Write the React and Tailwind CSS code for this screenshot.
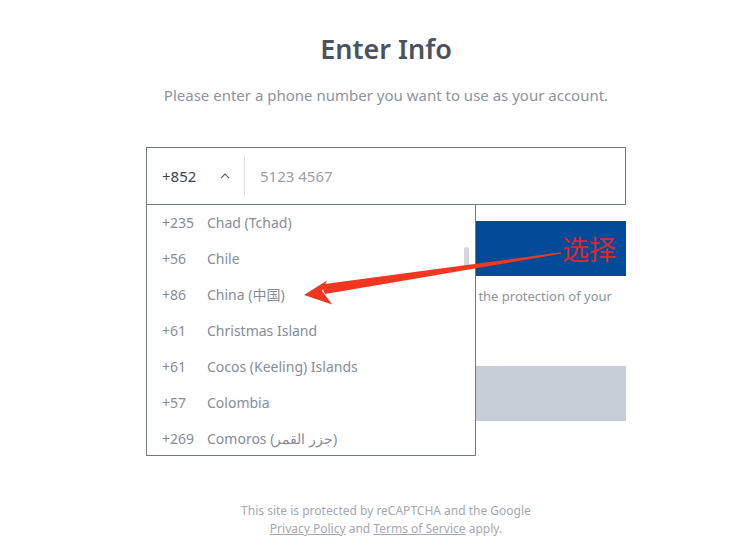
import React from "react";

const countries = [
  ["+235", "Chad (Tchad)"],
  ["+56", "Chile"],
  ["+86", "China (中国)"],
  ["+61", "Christmas Island"],
  ["+61", "Cocos (Keeling) Islands"],
  ["+57", "Colombia"],
  ["+269", "Comoros (جزر القمر)"],
];

export default function App() {
  return (
    <div
      className="relative w-[731px] h-[557px] bg-white overflow-hidden"
      style={{ fontFamily: '"Noto Sans", "Open Sans", "Noto Sans CJK SC", sans-serif' }}
    >
      <div className="flex flex-col items-center pl-[41px] pt-[31px]">
        <h1 className="text-[27px] leading-[36px] font-semibold text-[#4a5261]">Enter Info</h1>
        <p className="mt-[17px] text-[15px] leading-[22px] text-[#8c94a1]">
          Please enter a phone number you want to use as your account.
        </p>

        <div className="mt-[41px] w-[480px] flex flex-col">
          <div className="relative">
            <div className="h-[58px] border border-[#6e7886] flex items-center">
              <span className="pl-[15px] w-[73px] text-[15px] text-[#3c4350]">+852</span>
              <svg width="10" height="6" viewBox="0 0 10 6">
                <path d="M1 5.2 L5 1.2 L9 5.2" fill="none" stroke="#5b6370" strokeWidth="1.2" />
              </svg>
              <div className="ml-[14px] w-px h-[38px] bg-[#d6dae0]" />
              <span className="ml-[15px] text-[15px] text-[#9aa1ac]">5123 4567</span>
            </div>

            <div className="absolute left-0 top-[57px] w-[330px] h-[252px] bg-white border border-[#6e7886] z-10">
              {countries.map(([code, name], i) => (
                <div key={i} className="h-[36px] flex items-center text-[14px] leading-[20px] text-[#858d9a]">
                  <span className="pl-[15px] w-[60px] shrink-0">{code}</span>
                  <span className="whitespace-nowrap">{name}</span>
                </div>
              ))}
              <div className="absolute left-[317px] top-[42px] w-[5px] h-[22px] rounded-full bg-[#d3d6db]" />
            </div>
          </div>

          <div className="mt-[16px] h-[55px] bg-[#034b98]" />
          <div className="mt-[10px] h-[20px] flex justify-end pr-[14px] whitespace-nowrap text-[13px] leading-[20px] text-[#8c94a1]">
            the protection of your
          </div>
          <div className="h-[20px]" />
          <div className="mt-[40px] h-[55px] bg-[#c7ced7]" />
        </div>

        <div className="mt-[81px] text-center text-[12px] leading-[18px] text-[#a3a9b3]">
          <div>This site is protected by reCAPTCHA and the Google</div>
          <div>
            <span className="underline">Privacy Policy</span> and{" "}
            <span className="underline">Terms of Service</span> apply.
          </div>
        </div>
      </div>

      <svg className="absolute left-0 top-0 z-20 pointer-events-none" width="731" height="557" viewBox="0 0 731 557">
        <polygon points="561,252.3 321,284.5 325,294 561,253.7" fill="#f2361f" />
        <polygon points="304,295 327,280.5 322,291 332,304.5" fill="#f2361f" />
      </svg>
      <div
        className="absolute left-[562px] top-[232px] z-20 text-[27px] leading-[34px] text-[#e0242c]"
        style={{ fontFamily: '"Noto Sans CJK SC", sans-serif' }}
      >
        选择
      </div>
    </div>
  );
}
